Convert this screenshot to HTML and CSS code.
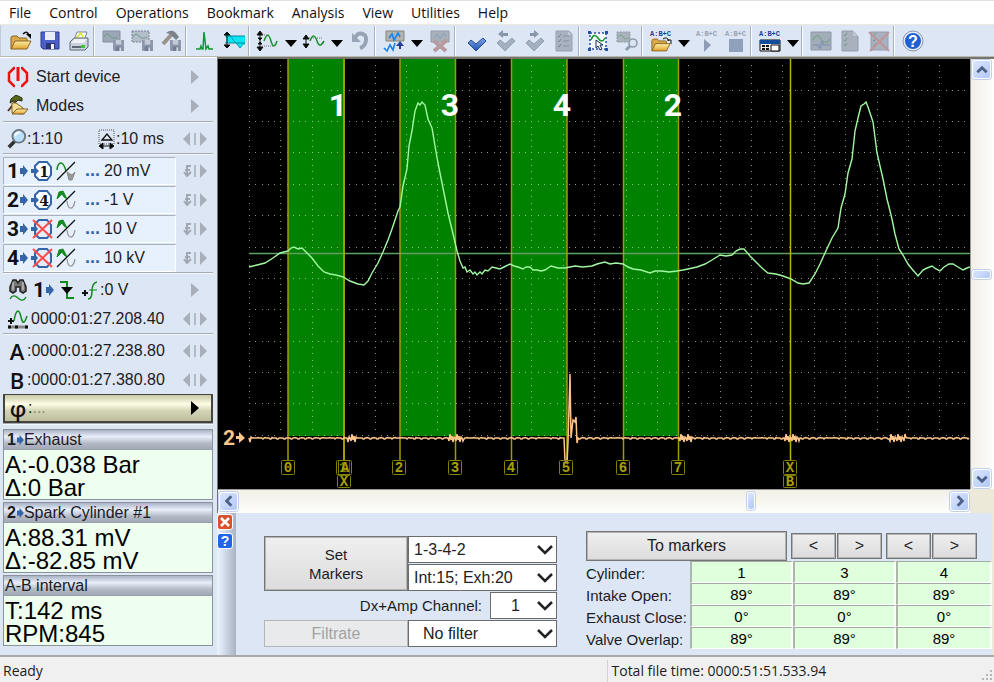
FILE: index.html
```html
<!DOCTYPE html>
<html lang="en">
<head>
  <meta charset="UTF-8">
  <title>Oscilloscope</title>
  <link rel="stylesheet" href="styles.css">
</head>
<body>
  <!-- shared icons -->
  <svg class="defs" width="0" height="0">
    <defs>
      <linearGradient id="gold" x1="0" y1="0" x2="0" y2="1"><stop offset="0" stop-color="#fdf0a8"/><stop offset="1" stop-color="#e0a22c"/></linearGradient>
      <linearGradient id="blue" x1="0" y1="0" x2="0" y2="1"><stop offset="0" stop-color="#7fa8ea"/><stop offset="1" stop-color="#1d4fae"/></linearGradient>
      <symbol id="folder" viewBox="0 0 22 15">
        <path d="M1 14V3q0-2 2-2h4l2 2h7q1 0 1 1v3" fill="#d9a94a" stroke="#8a6420"/>
        <path d="M1 14l4-8h16l-4 8z" fill="url(#gold)" stroke="#8a6420"/>
      </symbol>
      <symbol id="floppy" viewBox="0 0 12 12">
        <path d="M0 0h12v12H1L0 11z" fill="#8e97ac"/><path d="M3 0h6v5H3z" fill="#c4cad6"/><path d="M3 7h7v5H3z" fill="#737d94"/><path d="M7 8h2v4H7z" fill="#d4d9e3"/>
      </symbol>
      <symbol id="tick" viewBox="0 0 20 14"><path d="M1 6l3-3 5 4 7-6 3 3-10 10z" stroke-linejoin="round"/></symbol>
      <symbol id="arrow" viewBox="0 0 9 14"><path d="M1 4h3V1l5 6-5 6v-3H1z" fill="#3465a8"/></symbol>
      <symbol id="next" viewBox="0 0 26 14"><path d="M9 0l8 7-8 7z" fill="#a9afba"/></symbol>
      <symbol id="step" viewBox="0 0 26 14"><path d="M8 0v14L1 7zM18 0l7 7-7 7z" fill="#a9afba"/><path d="M12 1h2v12h-2z" fill="#b4bac4"/></symbol>
      <symbol id="flip" viewBox="0 0 26 14"><path d="M18 0l7 7-7 7z" fill="#a9afba"/><path d="M12 1h2v12h-2z" fill="#b4bac4"/><path d="M9 2H5v9M2 8l3 4 4-4M3 6h5" fill="none" stroke="#a0a6b2" stroke-width="2"/></symbol>
      <symbol id="octo" viewBox="0 0 22 22">
        <path d="M8 2h8l4 5v8l-4 5H8l-4-4V6z" fill="#fff" stroke="#3465a8" stroke-width="2"/><path d="M0 9h3V6l5 5-5 5v-3H0z" fill="#3465a8"/>
      </symbol>
      <symbol id="octo-off" viewBox="0 0 22 22">
        <path d="M8 2h8l4 5v8l-4 5H8l-4-4V6z" fill="#e4eefb" stroke="#3465a8" stroke-width="2"/><path d="M0 9h3V6l4 5-4 5v-3H0z" fill="#3465a8"/><path d="M2 2l19 18M21 2L2 20" stroke="#ff4a4a" stroke-width="2"/>
      </symbol>
      <symbol id="ac" viewBox="0 0 20 20"><path d="M1 9c1-9 6-10 9 1" fill="none" stroke="#128a1e" stroke-width="1.5"/><path d="M1 19L19 1" stroke="#111" stroke-width="1.3"/><path d="M11 11l2 8h3l3-8-3 3-2-1z" fill="#999" stroke="#888"/></symbol>
      <symbol id="dc" viewBox="0 0 20 20"><path d="M1 9l2-7 4-1 4 8-3-2-2-3-2 2z" fill="#128a1e" stroke="#128a1e"/><path d="M1 19L19 1" stroke="#111" stroke-width="1.3"/><path d="M11 11c1 9 6 10 8 0" fill="none" stroke="#999" stroke-width="1.3"/></symbol>
      <symbol id="formula" viewBox="0 0 24 8"><text x="1" y="7" class="formula">A:B+C</text></symbol>
      <symbol id="down" viewBox="0 0 12 7"><path d="M0 0h12L6 7z"/></symbol>
      <symbol id="sheet" viewBox="0 0 18 22"><path d="M1 1h13l3 3v17H1z" fill="#a9b2c0" stroke="#98a1af"/><path d="M13 1v4h4" fill="#c4cad4"/><path d="M3 6l1 1 2-3M3 11l1 1 2-3M3 16l1 1 2-3" fill="none" stroke="#7c8899"/><path d="M8 6h6M8 11h6M8 16h6" stroke="#8793a3"/></symbol>
    </defs>
  </svg>

  <nav class="menu">
    <a href="#">File</a>
    <a href="#">Control</a>
    <a href="#">Operations</a>
    <a href="#">Bookmark</a>
    <a href="#">Analysis</a>
    <a href="#">View</a>
    <a href="#">Utilities</a>
    <a href="#">Help</a>
  </nav>

  <div class="toolbar">
    <button class="tool" aria-label="Open"><svg viewBox="0 0 24 24"><use href="#folder" x="1" y="6" width="22" height="15"/><path d="M14 5q4-4 6 1" fill="none" stroke="#111" stroke-width="1.5"/><path d="M17 5h5v5z"/></svg></button>
    <button class="tool" aria-label="Save"><svg viewBox="0 0 24 24"><path d="M3 3h18v17H5l-2-2z" fill="#4c5fc8" stroke="#333f8f"/><path d="M7 3h10v8H7z" fill="#e9eefb"/><path d="M8 14h9v6H8z" fill="#2c356e"/><path d="M13 15h3v5h-3z" fill="#eef"/></svg></button>
    <button class="tool" aria-label="Print"><svg viewBox="0 0 24 24"><path d="M7 11l3-8h10l-3 9" fill="#f6fbff" stroke="#7b8795"/><path d="M9 9l5-5 2 4" fill="none" stroke="#d6e21c" stroke-width="1.5"/><path d="M3 13l4-4h14v9l-3 3H3z" fill="#cbd2db" stroke="#5f6977"/><path d="M4 14h13l3-4H8z" fill="#eef2f6"/><path d="M5 17h11v2H5z" fill="#5f6977"/><path d="M14 16h4v3h-4z" fill="#3cc43c"/></svg></button>
    <span class="sep"></span>
    <button class="tool" aria-label="Save view" disabled><svg viewBox="0 0 24 24"><path d="M2 2h17v11H2z" fill="#9ba6b6" stroke="#858f9f"/><path d="M3 8q3-5 6-1t8 1" fill="none" stroke="#6c9a83"/><use href="#floppy" x="12" y="11" width="11" height="11"/></svg></button>
    <button class="tool" aria-label="Save selection" disabled><svg viewBox="0 0 24 24"><path d="M2 2h17v11H2z" fill="#b4bdca" stroke="#77829a" stroke-dasharray="2 1"/><path d="M3 8q3-5 6-1t8 1" fill="none" stroke="#6c9a83"/><use href="#floppy" x="12" y="11" width="11" height="11"/></svg></button>
    <button class="tool" aria-label="Save tools" disabled><svg viewBox="0 0 24 24"><path d="M4 15L13 5" stroke="#9b938a" stroke-width="4"/><path d="M7 4q5-4 9-1l4 5-3 3-6-6z" fill="#7b828a"/><use href="#floppy" x="11" y="11" width="11" height="11"/></svg></button>
    <span class="sep"></span>
    <button class="tool" aria-label="Spectrum"><svg viewBox="0 0 24 24"><path d="M3 20h4l1-3 1 3h1l1-17 2 17 2-3 1 3h4" fill="none" stroke="#0a9a32" stroke-width="1.5"/></svg></button>
    <button class="tool" aria-label="Fill waveform"><svg viewBox="0 0 24 24"><path d="M4 7h19v7l-2 1-3 4-4-5H4z" fill="#10e4f2"/><path d="M4 9l4-3 4 6 3 3 3 4 3-4 2 0" fill="none" stroke="#06a0b6"/><path d="M3 7h20M3 14h20" stroke="#07889c"/><path d="M5 4v15M2 6l3-3 3 3zM2 16l3 3 3-3z" stroke="#111"/></svg></button>
    <span class="sep"></span>
    <button class="tool" aria-label="Vertical scale"><svg viewBox="0 0 24 24"><path d="M4 3v18M1 6h6L4 2zM2 9h4l-2 2zM2 15h4l-2-2zM1 18h6l-3 4z" stroke="#111"/><path d="M6 6h8M6 17h11" stroke="#777" stroke-dasharray="1 1"/><path d="M8 12c3-8 5-7 7 0s4 6 6 0" fill="none" stroke="#178f2a" stroke-width="1.5"/></svg></button>
    <button class="drop" aria-label="Vertical scale options"><svg viewBox="0 0 12 7"><use href="#down"/></svg></button>
    <button class="tool" aria-label="Compress"><svg viewBox="0 0 24 24"><path d="M4 6v13M1 10h6L4 6zM1 15h6l-3 4z" stroke="#111"/><path d="M7 9h13" stroke="#777" stroke-dasharray="1 1"/><path d="M8 12c3-7 5-6 7 0s4 5 7 0" fill="none" stroke="#178f2a" stroke-width="1.5"/></svg></button>
    <button class="drop" aria-label="Compress options"><svg viewBox="0 0 12 7"><use href="#down"/></svg></button>
    <button class="tool" aria-label="Undo" disabled><svg viewBox="0 0 24 24"><path d="M7 9c3-7 12-5 11 2 0 4-3 7-6 8" fill="none" stroke="#98a3b5" stroke-width="4"/><path d="M4 4v9h9z" fill="#98a3b5"/></svg></button>
    <span class="sep"></span>
    <button class="tool" aria-label="Insert fragment"><svg viewBox="0 0 24 24"><path d="M4 2h18v10H4z" fill="#b3b3ad" stroke="#85857c"/><path d="M7 9l3-4 2 6 4-7 2 4" fill="none" stroke="#1680f0" stroke-width="1.6"/><path d="M2 19l3 3 3-6 3 5 2-7" fill="none" stroke="#1680f0" stroke-width="1.6"/><path d="M18 12l4 5h-8zM17 16h2v4h-2z" fill="#283f9c"/></svg></button>
    <button class="drop" aria-label="Insert options"><svg viewBox="0 0 12 7"><use href="#down"/></svg></button>
    <button class="tool" aria-label="Delete fragment" disabled><svg viewBox="0 0 24 24"><path d="M3 2h18v11H3z" fill="#a8b0ba" stroke="#929ba7"/><path d="M6 9l3-4 3 5 4-6 2 4" fill="none" stroke="#84a2c0"/><path d="M6 12l12 10M19 11L6 22" stroke="#b89b9f" stroke-width="4"/></svg></button>
    <span class="sep wide"></span>
    <button class="tool" aria-label="Bookmark"><svg viewBox="0 0 24 24"><use href="#tick" x="2" y="8" width="20" height="14" fill="url(#blue)" stroke="#254b94"/></svg></button>
    <button class="tool" aria-label="Previous bookmark" disabled><svg viewBox="0 0 24 24"><use href="#tick" x="2" y="8" width="20" height="14" fill="#a4afc0" stroke="#93a0b3"/><path d="M4 5l5-4v3h5v3H9v2z" fill="#8896aa"/></svg></button>
    <button class="tool" aria-label="Next bookmark" disabled><svg viewBox="0 0 24 24"><use href="#tick" x="2" y="8" width="20" height="14" fill="#a4afc0" stroke="#93a0b3"/><path d="M16 5l-5-4v3H7v3h4v2z" fill="#8896aa"/></svg></button>
    <button class="tool" aria-label="Bookmark list" disabled><svg viewBox="0 0 24 24"><use href="#sheet" x="3" y="1" width="18" height="22"/></svg></button>
    <span class="sep"></span>
    <button class="tool" aria-label="Select area"><svg viewBox="0 0 24 24"><path d="M4 4h16v16H4z" fill="#f5fbff" stroke="#2450a8" stroke-width="1.5" stroke-dasharray="2 2"/><path d="M2 2h3v3H2zM19 2h3v3h-3zM2 19h3v3H2zM19 19h3v3h-3z" fill="#2450a8"/><path d="M5 11q3-8 7-2t7 0" fill="none" stroke="#14952e" stroke-width="1.6"/><path d="M10 11v8l2-2 2 4 2-1-2-4h3z" fill="#fff" stroke="#162b58"/></svg></button>
    <button class="tool" aria-label="Zoom area" disabled><svg viewBox="0 0 24 24"><path d="M2 3h13v10H2z" fill="#a8b3bc" stroke="#8d99a5" stroke-dasharray="2 1"/><path d="M3 8q3-4 5 0t6 0" fill="none" stroke="#7ba08a"/><circle cx="18" cy="14" r="4" fill="#dce5ef" stroke="#8f9bae" stroke-width="1.6"/><path d="M15 17l-4 4" stroke="#8f9bae" stroke-width="3"/></svg></button>
    <span class="sep"></span>
    <button class="tool" aria-label="Open script"><svg viewBox="0 0 24 24"><use href="#formula" width="24" height="8" fill="#1d3f9b"/><use href="#folder" x="2" y="9" width="20" height="14"/><path d="M14 10q4-3 6 2M18 11h4v4" fill="none" stroke="#111"/></svg></button>
    <button class="drop" aria-label="Script options"><svg viewBox="0 0 12 7"><use href="#down"/></svg></button>
    <button class="tool" aria-label="Run script" disabled><svg viewBox="0 0 24 24"><use href="#formula" width="24" height="8" fill="#98a2b2"/><path d="M9 10l7 6-7 7z" fill="#8e9bb2"/></svg></button>
    <button class="tool" aria-label="Stop script" disabled><svg viewBox="0 0 24 24"><use href="#formula" width="24" height="8" fill="#98a2b2"/><path d="M5 10h14v13H5z" fill="#8fa0bd"/></svg></button>
    <span class="sep"></span>
    <button class="tool" aria-label="Script panel"><svg viewBox="0 0 24 24"><use href="#formula" width="24" height="8" fill="#1d3f9b"/><path d="M2 11h20v11H2z" fill="#eee" stroke="#111"/><path d="M2 11h20v4H2z" fill="#124c9a"/><path d="M4 17h3M8 17h3M4 20h3M8 20h3" stroke="#111" stroke-width="2"/><path d="M13 16h8v6h-8z" fill="#fff" stroke="#111"/></svg></button>
    <button class="drop" aria-label="Panel options"><svg viewBox="0 0 12 7"><use href="#down"/></svg></button>
    <span class="sep"></span>
    <button class="tool" aria-label="Waveform report" disabled><svg viewBox="0 0 24 24"><path d="M2 3h20v18H2z" fill="#a3adb9" stroke="#8f99a5"/><path d="M4 11q4-8 8-1t9 0" fill="none" stroke="#7fa593" stroke-width="1.5"/><path d="M4 16h6v3h2v-6h2v3h7" fill="none" stroke="#778bad"/></svg></button>
    <button class="tool" aria-label="Report list" disabled><svg viewBox="0 0 24 24"><path d="M4 2h11l5 5v15H4z" fill="#a8b1bd" stroke="#949eab"/><path d="M15 2v5h5" fill="#c0c7d1"/><path d="M6 6l1 1 2-3M6 11l1 1 2-3M6 16l1 1 2-3" fill="none" stroke="#6f9a83"/></svg></button>
    <button class="tool" aria-label="Remove report" disabled><svg viewBox="0 0 24 24"><path d="M4 3h17v18H4z" fill="#a8b1bd" stroke="#949eab"/><path d="M6 6l1 1 2-3M6 11l1 1 2-3M6 16l1 1 2-3" fill="none" stroke="#6f9a83"/><path d="M2 3l20 19M22 3L3 22" stroke="#bf949a" stroke-width="2"/></svg></button>
    <span class="sep"></span>
    <button class="tool" aria-label="Help"><svg viewBox="0 0 24 24"><circle cx="12" cy="12" r="9" fill="#1f5fd6" stroke="#e4eaf4" stroke-width="2"/><circle cx="12" cy="12" r="10" fill="none" stroke="#8a97ad"/><text x="12" y="18" class="help-mark">?</text></svg></button>
  </div>

  <main class="workspace">
    <aside class="sidebar">
      <div class="row">
        <svg class="icon" viewBox="0 0 22 22"><path d="M8 2H7L2 7v8l5 5h1M14 2h1l5 5v8l-5 5h-1" fill="none" stroke="#f01010" stroke-width="2.5"/><path d="M11 1v14" stroke="#f01010" stroke-width="3"/></svg>
        <span class="command">Start device</span>
        <svg class="nudge"><use href="#next"/></svg>
      </div>
      <div class="row">
        <svg class="icon" viewBox="0 0 22 22"><path d="M4 4l5-4 6 3v3l-4-1-2 2-3-1-3 2z" fill="#58661c" stroke="#222c08"/><path d="M9 6L1 16" stroke="#5a2f1e" stroke-width="2"/><path d="M5 18V8h4l7 5v6z" fill="#f4dc92" stroke="#806020"/><path d="M5 19l5-5h11l-4 5z" fill="url(#gold)" stroke="#80602a"/></svg>
        <span class="command">Modes</span>
        <svg class="nudge"><use href="#next"/></svg>
      </div>
      <hr>
      <div class="row">
        <span class="field">
          <svg class="icon" viewBox="0 0 22 22"><path d="M9 13l-7 7" stroke="#333" stroke-width="4"/><circle cx="13" cy="8" r="7" fill="#b9e0fb" stroke="#6c7480" stroke-width="2"/><path d="M9 8q0-4 5-4" stroke="#fff" stroke-width="2" fill="none"/></svg><span>:1:10</span>
        </span>
        <span class="field">
          <svg class="small" viewBox="0 0 18 22"><path d="M1 2h15v14H1z" fill="none" stroke="#555" stroke-dasharray="1 1"/><path d="M4 12l5-6 5 6z" fill="none" stroke="#111" stroke-width="1.3"/><path d="M2 18h13M5 15l-4 3 4 3zM12 15l4 3-4 3z" stroke="#111"/></svg><span>:10 ms</span>
        </span>
        <svg class="nudge"><use href="#step"/></svg>
      </div>
      <hr>
      <div class="row channel">
        <div class="input">
          <b>1</b><svg class="arrow"><use href="#arrow"/></svg>
          <svg class="octo" viewBox="0 0 22 22"><use href="#octo"/><text x="13" y="17">1</text></svg>
          <svg class="wave"><use href="#ac"/></svg><b class="dots">...</b><span>20 mV</span>
        </div>
        <svg class="nudge"><use href="#flip"/></svg>
      </div>
      <div class="row channel">
        <div class="input">
          <b>2</b><svg class="arrow"><use href="#arrow"/></svg>
          <svg class="octo" viewBox="0 0 22 22"><use href="#octo"/><text x="13" y="17">4</text></svg>
          <svg class="wave"><use href="#dc"/></svg><b class="dots">...</b><span>-1 V</span>
        </div>
        <svg class="nudge"><use href="#flip"/></svg>
      </div>
      <div class="row channel">
        <div class="input">
          <b>3</b><svg class="arrow"><use href="#arrow"/></svg>
          <svg class="octo"><use href="#octo-off"/></svg>
          <svg class="wave"><use href="#dc"/></svg><b class="dots">...</b><span>10 V</span>
        </div>
        <svg class="nudge"><use href="#flip"/></svg>
      </div>
      <div class="row channel">
        <div class="input">
          <b>4</b><svg class="arrow"><use href="#arrow"/></svg>
          <svg class="octo"><use href="#octo-off"/></svg>
          <svg class="wave"><use href="#dc"/></svg><b class="dots">...</b><span>10 kV</span>
        </div>
        <svg class="nudge"><use href="#flip"/></svg>
      </div>
      <hr>
      <div class="row trigger">
        <svg class="icon" viewBox="0 0 22 22"><path d="M3 12V8l3-7h3l2 3 2-3h3l3 7v4l-3 2-3-2V8h-4v4l-3 2z" fill="#777" stroke="#222" stroke-width="1.5"/><path d="M6 3v8M16 3v8" stroke="#ddd"/><path d="M3 20c2-4 5-4 8-1s6 3 8-1" fill="none" stroke="#128a1e" stroke-width="1.4"/></svg>
        <span><b>1</b><svg class="arrow"><use href="#arrow"/></svg></span>
        <svg class="small" viewBox="0 0 18 22"><path d="M2 3h7v16h7" fill="none" stroke="#128a1e" stroke-width="2"/><path d="M3 8h12l-6 7z"/></svg>
        <span><svg class="small" viewBox="0 0 18 22"><path d="M1 14h6M4 11v6" stroke="#111" stroke-width="2"/><path d="M7 20q4 0 4-8t5-9" fill="none" stroke="#128a1e" stroke-width="1.5"/><path d="M8 11h8" stroke="#128a1e"/></svg>:0 V</span>
        <svg class="nudge"><use href="#next"/></svg>
      </div>
      <div class="row">
        <svg class="icon" viewBox="0 0 22 22"><path d="M1 13h6M4 10v6" stroke="#111" stroke-width="2"/><path d="M7 13c2-12 5-13 7-4s4 5 6-1" fill="none" stroke="#128a1e" stroke-width="1.5"/><path d="M1 19h20" stroke="#888" stroke-width="3"/><path d="M1 19h3M8 19h3M18 19h3" stroke="#111" stroke-width="3"/></svg>
        <span class="time">0000:01:27.208.40</span>
        <svg class="nudge"><use href="#step"/></svg>
      </div>
      <hr>
      <div class="row">
        <b class="letter">A</b><span>:0000:01:27.238.80</span>
        <svg class="nudge"><use href="#step"/></svg>
      </div>
      <div class="row">
        <b class="letter">B</b><span>:0000:01:27.380.80</span>
        <svg class="nudge"><use href="#step"/></svg>
      </div>
      <button class="phase"><b class="letter">φ</b><span>:<i>...</i></span><svg class="nudge"><path d="M9 0l8 7-8 7z"/></svg></button>
      <hr>
      <div class="readouts">
        <section class="readout">
          <h2><b>1</b><svg class="arrow"><use href="#arrow"/></svg>Exhaust</h2>
          <p>A:-0.038 Bar</p>
          <p>Δ:0 Bar</p>
        </section>
        <section class="readout">
          <h2><b>2</b><svg class="arrow"><use href="#arrow"/></svg>Spark Cylinder #1</h2>
          <p>A:88.31 mV</p>
          <p>Δ:-82.85 mV</p>
        </section>
        <section class="readout">
          <h2>A-B interval</h2>
          <p>T:142 ms</p>
          <p>RPM:845</p>
        </section>
      </div>
    </aside>

    <div class="content">
      <div class="scope">
        <svg class="chart" viewBox="218 59 752 430" preserveAspectRatio="none">
          <g fill="#008200">
            <rect x="288" y="59" width="56" height="377"/>
            <rect x="400" y="59" width="55" height="377"/>
            <rect x="512" y="59" width="55" height="377"/>
            <rect x="623" y="59" width="56" height="377"/>
          </g>
          <path id="grid" class="grid"/>
          <path d="M249 253.5H970" stroke="#5f9f66" stroke-width="1.5"/>
          <g stroke="#a39c00" stroke-width="1.5">
            <path d="M288 59V460M400 59V460M455.5 59V460M511.5 59V460M567 59V460M623.5 59V460M678.5 59V460"/>
            <path d="M344 59V460" stroke-width="2"/>
            <path d="M790.5 59V460" stroke="#bdb500"/>
          </g>
          <polyline class="pressure" points="249,267 257,265 265,263 273,258 280,253 288,251 291,248 294,247 298,249 302,248 306,252 312,258 318,266 324,272 330,274 336,275 343,277 350,281 358,284 364,285 368,281 372,273 378,263 383,252 388,240 392,229 398,211 400,207 403,186 407,169 409,146 412,131 415,111 418,103 420,105 422,102 425,105 428,119 432,128 435,146 438,163 442,183 448,213 454,238 457,251 460,261 463,268 465,267 467,272 470,270 473,274 475,272 477,275 480,272 482,274 485,270 488,271 492,267 496,268 500,269 504,267 510,264 514,266 518,267 523,269 526,267 530,267 533,270 537,270 541,271 545,270 551,266 558,268 565,268 575,266 583,267 592,266 597,264 605,262 610,264 616,263 623,264 628,267 633,269 641,270 650,273 655,271 662,271 669,272 677,271 683,270 688,269 697,267 705,264 712,260 720,255 726,256 732,255 736,251 740,249 744,249 750,256 757,263 763,269 768,273 776,274 783,276 791,279 798,283 803,284 809,283 815,274 820,264 825,253 832,238 838,228 841,208 845,194 848,173 852,159 855,131 858,118 861,106 864,104 866,102 868,107 873,122 877,153 883,179 887,199 892,219 895,234 899,249 903,255 908,264 912,269 918,276 923,270 927,268 932,266 936,269 940,271 944,267 949,264 953,264 958,267 963,270 967,268 970,267"/>
          <path id="spark" class="spark"/>
          <g class="cylinder">
            <text x="338" y="116">1</text>
            <text x="450" y="116">3</text>
            <text x="562" y="116">4</text>
            <text x="673" y="116">2</text>
          </g>
          <text x="223" y="445" class="trace-label">2</text>
          <path d="M236 436h3v-4l6 6-6 5v-4h-3z" fill="#ffc68c"/>
          <g id="marks" class="marks"></g>
        </svg>
        <div class="scroll vertical" role="scrollbar" aria-label="Vertical position">
          <button aria-label="Up"><svg viewBox="0 0 12 12"><path d="M2 8l4-4 4 4"/></svg></button>
          <span class="thumb"></span>
          <button aria-label="Down"><svg viewBox="0 0 12 12"><path d="M2 4l4 4 4-4"/></svg></button>
        </div>
        <div class="scroll horizontal" role="scrollbar" aria-label="Horizontal position">
          <button aria-label="Left"><svg viewBox="0 0 12 12"><path d="M8 2L4 6l4 4"/></svg></button>
          <span class="thumb"></span>
          <button aria-label="Right"><svg viewBox="0 0 12 12"><path d="M4 2l4 4-4 4"/></svg></button>
        </div>
      </div>

      <div class="panel">
        <div class="grip">
          <button class="close" aria-label="Close"><svg viewBox="0 0 14 14"><path d="M3 3l8 8M11 3l-8 8" stroke="#fff" stroke-width="2.5"/></svg></button>
          <button class="help" aria-label="Panel help">?</button>
        </div>
        <form class="markers">
          <button type="button" class="set">Set<br>Markers</button>
          <select aria-label="Firing order"><option>1-3-4-2</option></select>
          <select aria-label="Valve timing"><option>Int:15; Exh:20</option></select>
          <div class="channel-pick">
            <label for="channel">Dx+Amp Channel:</label>
            <select id="channel"><option>1</option></select>
          </div>
          <button type="button" disabled>Filtrate</button>
          <select class="filter" aria-label="Filter"><option>No filter</option></select>
        </form>
        <div class="results">
          <div class="actions">
            <button class="to-markers">To markers</button>
            <div class="pair"><button>&lt;</button><button>&gt;</button></div>
            <div class="pair"><button>&lt;</button><button>&gt;</button></div>
          </div>
          <table>
            <tr><th scope="row">Cylinder:</th><td>1</td><td>3</td><td>4</td></tr>
            <tr><th scope="row">Intake Open:</th><td>89°</td><td>89°</td><td>89°</td></tr>
            <tr><th scope="row">Exhaust Close:</th><td>0°</td><td>0°</td><td>0°</td></tr>
            <tr><th scope="row">Valve Overlap:</th><td>89°</td><td>89°</td><td>89°</td></tr>
          </table>
        </div>
      </div>
    </div>
  </main>

  <footer class="status">
    <span>Ready</span>
    <span>Total file time: 0000:51:51.533.94</span>
    <svg viewBox="0 0 12 12"><path d="M9 1h2v2H9zM5 5h2v2H5zM9 5h2v2H9zM1 9h2v2H1zM5 9h2v2H5zM9 9h2v2H9z" fill="#b5b5b5"/></svg>
  </footer>

  <script src="chart.js"></script>
</body>
</html>
```
FILE: styles.css
```css
* { box-sizing: border-box; }
body { margin: 0; min-height: 100vh; display: flex; flex-direction: column; background: #dde6f4; color: #1c1c24; font: 16px "Liberation Sans", Arial, sans-serif; }
button, select { font: inherit; color: inherit; margin: 0; padding: 0; border-radius: 0; }
svg { display: block; flex: none; }
.defs { position: absolute; }

/* menu and toolbar */
.menu { display: flex; gap: 18px; height: 25px; padding-left: 9px; align-items: center; background: #fff; border-top: 1px solid #e3e3e3; border-bottom: 1px solid #ece9e0; font: 14px "Open Sans", "Noto Sans", sans-serif; }
.menu a { color: #111; text-decoration: none; }
.toolbar { display: flex; align-items: center; height: 32px; padding-left: 5px; background: #dde6f4; border-left: 1px solid #c4cad4; border-bottom: 1px solid #b9b7ae; }
.toolbar button { display: flex; align-items: center; justify-content: center; height: 28px; border: 0; background: none; }
.tool { width: 29px; }
.tool svg { width: 24px; height: 24px; }
.drop { width: 17px; }
.drop svg { width: 12px; height: 7px; margin-top: 5px; }
.sep { width: 5px; height: 30px; border-left: 1px solid #a9b1bd; box-shadow: inset 1px 0 #fff; }
.sep.wide { width: 8px; }
.formula { font: bold 7px "Liberation Mono", monospace; }
.help-mark { font: bold 16px "Liberation Sans", Arial, sans-serif; fill: #fff; text-anchor: middle; }

.workspace { flex: 1; display: flex; min-height: 0; }

/* sidebar */
.sidebar { flex: 0 0 217px; padding: 4px 4px 0 3px; border-top: 1px solid #fff; }
.sidebar hr { height: 2px; margin: 1px 0; border: 0; border-top: 1px solid #a6abb5; background: #f4f7fc; }
.sidebar hr ~ hr { margin-top: 0; }
.row { display: flex; align-items: center; height: 29px; padding: 0 5px 0 4px; white-space: nowrap; }
.icon { width: 22px; height: 22px; }
.small { width: 18px; height: 22px; }
.arrow { width: 9px; height: 14px; }
.nudge { width: 26px; height: 14px; margin-left: auto; }
.command { padding-left: 7px; }
.time { padding-left: 2px; }
.field { display: flex; align-items: center; flex: 0 0 91px; }
.field:nth-of-type(2) { flex-basis: auto; }
.field .icon { width: 20px; }
.letter { width: 20px; text-align: center; color: #111; font: 600 22px "Open Sans", "Noto Sans", sans-serif; }

.channel { padding-left: 0; }
.input { display: flex; align-items: center; width: 173px; height: 28px; padding-left: 3px; background: #e7f0fd; border: 1px solid #fff; border-top-color: #abb2bf; border-left-color: #abb2bf; }
.input > b:first-child, .trigger b { font: bold 21px Roboto, "Liberation Sans", sans-serif; color: #111; }
.octo { width: 22px; height: 22px; margin: 0 3px; }
.octo text { font: bold 14px "DejaVu Serif", serif; text-anchor: middle; fill: #111; }
.wave { width: 20px; height: 20px; }
.dots { width: 24px; text-align: right; color: #3465a8; font-size: 18px; }
.input .dots + span { padding-left: 4px; }
.trigger { gap: 4px; }
.trigger span { display: flex; align-items: center; }
.trigger .small { margin-right: 1px; }

.phase { display: flex; align-items: center; width: 100%; height: 29px; padding: 0 3px; border: 2px solid #45453c; border-top-width: 1px; background: linear-gradient(#c6c6a8, #fffee6 35%, #d4d4b6 60%, #bdbda0); }
.phase i { color: #8c8c7c; font-style: normal; }
.phase .letter { line-height: 22px; }

.readouts { display: flex; flex-direction: column; gap: 2px; padding-top: 3px; }
.readout { height: 71px; border: 1px solid #8c929c; background: #efffef; }
.readout h2 { display: flex; align-items: center; height: 20px; margin: 0 0 3px; padding-left: 1px; background: linear-gradient(#aab4c4, #e8eefa 35%, #b3bac6 70%, #a2a9b6); font-size: 16px; font-weight: normal; border-bottom: 1px solid #9aa0aa; }
.readout h2 b { padding-left: 2px; }
.readout .arrow { width: 8px; height: 12px; }
.readout p { margin: 0; padding-left: 1px; font-size: 24px; line-height: 23px; color: #000; }

/* scope */
.content { flex: 1; min-width: 0; display: flex; flex-direction: column; }
.scope { flex: 1; min-height: 0; display: grid; grid-template: minmax(0, 1fr) 24px / minmax(0, 1fr) 24px; background: #ece9d8; border-top: 2px solid #77766e; border-left: 1px solid #77766e; }
.chart { width: 100%; height: 100%; min-height: 0; background: #000; overflow: hidden; }
.grid { stroke: #fff; stroke-opacity: .55; shape-rendering: crispEdges; }
.pressure { fill: none; stroke: #a2f8a2; stroke-width: 1.4; }
.spark { fill: none; stroke: #ffc68c; stroke-width: 1.5; }
.cylinder { font: bold 32px Roboto, "Liberation Sans", sans-serif; fill: #fff; text-anchor: middle; }
.trace-label { font: bold 21px Roboto, "Liberation Sans", sans-serif; fill: #ffc68c; }
.marks text { font: bold 14px "Liberation Mono", monospace; fill: #a8a000; text-anchor: middle; }
.marks rect { fill: #000; fill-opacity: .3; stroke: #857f00; }

.scroll { display: flex; justify-content: space-between; align-items: center; }
.scroll button, .thumb { border: 1px solid #fff; border-radius: 3px; background: linear-gradient(135deg, #dbe6ff, #b2c8f8); box-shadow: 0 0 0 1px #c0cfea; }
.scroll button { display: flex; align-items: center; justify-content: center; width: 19px; height: 19px; }
.scroll svg { width: 14px; height: 14px; }
.scroll path { fill: none; stroke: #4d6185; stroke-width: 2.4; }
.vertical { flex-direction: column; padding: 1px 4px 1px 2px; border-left: 1px solid #999; background: linear-gradient(90deg, #f1efe7, #fefefb); }
.vertical .thumb { width: 19px; height: 9px; }
.horizontal { padding: 2px 1px 3px; border-top: 1px solid #999; background: linear-gradient(#f1efe7, #fefefb); }
.horizontal .thumb { width: 8px; height: 18px; margin-left: auto; margin-right: 26%; }

/* bottom panel */
.panel { display: flex; min-height: 142px; border-right: 2px solid #ece9d8; }
.grip { width: 19px; flex: none; padding-top: 1px; background: linear-gradient(90deg, #eef4fd, #dce5f3 25%, #a9b3c4); }
.grip button { display: flex; align-items: center; justify-content: center; width: 16px; height: 16px; margin-bottom: 3px; border: 1px solid #fff; border-radius: 3px; color: #fff; font-size: 14px; font-weight: bold; }
.close { background: #d9502c; }
.help { background: #1f66e8; }
.grip svg { width: 14px; height: 14px; }
.markers { display: grid; grid-template-columns: 144px 149px; grid-auto-rows: 27px; gap: 1px 0; padding: 23px 29px 0 28px; align-content: start; font-size: 15px; }
.markers button, .results button { border: 1px solid #757575; box-shadow: inset 0 0 0 1px #b4b4b4; background: linear-gradient(#efefef, #dcdcdc); }
.markers .set { grid-row: span 2; line-height: 19px; }
.markers button:disabled { border-color: #b5b5b5; box-shadow: none; color: #a3a3a3; background: #e8eaec; font-size: 16px; }
.markers select { appearance: none; width: 100%; height: 27px; padding-left: 5px; border: 1px solid #6c6c6c; font-size: 16px; color: #222; background: #fff url("data:image/svg+xml,%3Csvg xmlns='http://www.w3.org/2000/svg' width='16' height='10'%3E%3Cpath d='M1 1l7 7 7-7' fill='none' stroke='%23222' stroke-width='2.5'/%3E%3C/svg%3E") no-repeat right 3px center; }
.channel-pick { grid-column: span 2; display: flex; justify-content: flex-end; align-items: center; gap: 8px; }
.markers .channel-pick select { width: 67px; padding-left: 20px; }
.markers .filter { padding-left: 14px; }
.results { flex: 1; min-width: 0; padding-top: 18px; }
.actions { display: flex; align-items: center; gap: 4px; }
.to-markers { width: 201px; height: 30px; }
.pair { display: flex; gap: 1px; }
.pair button { width: 45px; height: 26px; }
.results table { table-layout: fixed; width: 100%; border-spacing: 0; font-size: 15px; line-height: 17px; }
.results th { width: 104px; padding: 3px 0 0; text-align: left; font-weight: normal; white-space: nowrap; }
.results td { width: 103px; height: 22px; padding: 0; text-align: center; color: #000; background: #e0ffdc; border: solid #fff; border-width: 1px 2px 1px 2px; border-top-color: #a5aaa0; border-left-color: #b0b5aa; }
.results td:last-child { width: auto; }

/* status bar */
.status { display: flex; align-items: center; height: 27px; padding: 2px 0 0 3px; background: #f0f0f0; border-top: 2px solid #a9a9a9; font: 14px "Open Sans", "Noto Sans", sans-serif; }
.status span:first-child { flex: 0 0 61%; line-height: 22px; border-right: 1px solid #d0d0d0; }
.status span + span { padding-left: 4px; }
.status svg { width: 12px; height: 12px; margin: 8px 1px 0 auto; }
```
FILE: chart.js
```javascript
const svgNs = 'http://www.w3.org/2000/svg';
const left = 249, top0 = 58.3, cell = 31.38;

// dotted grid, five dots per cell
let dots = '';
const dot = (x, y) => { dots += `M${Math.round(x)} ${Math.round(y) + 0.5}h1`; };
for (let c = 0; c <= 22; c++) {
  for (let i = 1; i < 60; i++) dot(left + c * cell, top0 + i * cell / 5);
}
for (let r = 1; r <= 12; r++) {
  for (let i = 0; i < 115; i++) if (i % 5) dot(left + i * cell / 5, top0 + r * cell);
}
document.getElementById('grid').setAttribute('d', dots);

// ignition trace: flat line, small bursts, one discharge
const bursts = [[249, 252], [348, 357], [449, 463], [679, 693], [784, 799], [890, 905]];
let path = 'M249 438';
for (let x = 250; x <= 969; x++) {
  if (x === 565) {
    path += 'L565 461L567 463L568 442L570 374L571 438L573 420L575 422L576 417L577 443L578 438';
    x = 578;
    continue;
  }
  const near = bursts.some(b => x >= b[0] && x <= b[1]);
  const amp = near ? [0, 3, -4, 2, -2, 4, -1][x % 7] : [0, 0, 1, 0, 0, 0, 1, 0, -0.5][(x * 5 + (x >> 3)) % 9];
  path += `L${x} ${438 + amp}`;
}
document.getElementById('spark').setAttribute('d', path);

// marker tags under the trace
const marks = [['0', 288, 0], ['1', 343, 0], ['A', 345, 0], ['X', 344, 1], ['2', 399, 0], ['3', 455, 0],
  ['4', 511, 0], ['5', 566, 0], ['6', 623, 0], ['7', 678, 0], ['X', 790, 0], ['B', 790, 1]];
for (const [name, x, row] of marks) {
  const y = row ? 475 : 460;
  const box = document.createElementNS(svgNs, 'rect');
  const text = document.createElementNS(svgNs, 'text');
  const boxAttrs = { x: x - 6.5, y: y + 0.5, width: 13, height: row ? 12 : 14, rx: 1 };
  for (const key in boxAttrs) box.setAttribute(key, boxAttrs[key]);
  text.setAttribute('x', x);
  text.setAttribute('y', y + 12 - row);
  text.textContent = name;
  document.getElementById('marks').append(box, text);
}
```
